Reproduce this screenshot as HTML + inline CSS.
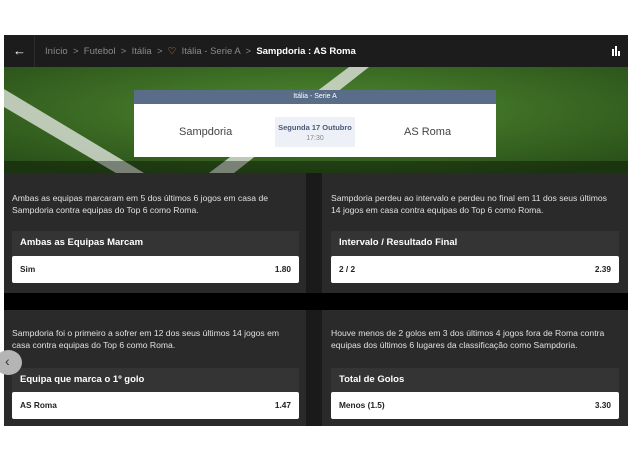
<html><head><style>
body{margin:0;width:633px;height:462px;background:#fff;font-family:"Liberation Sans",sans-serif;position:relative;overflow:hidden}
.a{position:absolute}
.top{left:4px;top:35px;width:624px;height:32px;background:#1c1c1c}
.crumb{left:45px;top:46px;font-size:9.5px;color:#8a8a8a;white-space:nowrap}
.crumb b{color:#fff}
.panel{background:#2a2a2a}
.txt{font-size:8.6px;color:#e0e0e0;line-height:12px;white-space:nowrap}
.hd{background:#343434;color:#fff;font-weight:bold;font-size:9.5px;padding-left:8px;box-sizing:border-box;line-height:24px}
.row{background:#fff;border-radius:2px;font-size:8.3px;font-weight:bold;color:#222;line-height:27px;padding:0 8px;box-sizing:border-box;display:flex;justify-content:space-between}
</style></head><body>
<div class="a top"></div>
<div class="a" style="left:34px;top:35px;width:1px;height:32px;background:#2c2c2c"></div>
<div class="a" style="left:13px;top:43px;color:#fff;font-size:13px">&#8592;</div>
<div class="a crumb">Início &nbsp;&gt;&nbsp; Futebol &nbsp;&gt;&nbsp; Itália &nbsp;&gt;&nbsp; <span style="color:#e59a3c">&#9825;</span>&nbsp; Itália - Serie A &nbsp;&gt;&nbsp; <b>Sampdoria : AS Roma</b></div>
<svg class="a" style="left:612px;top:46px" width="9" height="10"><rect x="0" y="3" width="2" height="7" fill="#fff"/><rect x="3" y="0" width="2" height="10" fill="#fff"/><rect x="6" y="5" width="2" height="5" fill="#fff"/></svg>
<svg class="a" style="left:4px;top:67px" width="624" height="106">
<defs><radialGradient id="g" cx="50%" cy="40%" r="70%"><stop offset="0" stop-color="#4f8a30"/><stop offset="1" stop-color="#2a5019"/></radialGradient></defs>
<rect width="624" height="106" fill="url(#g)"/>
<polygon points="0,22 0,40 112,106 140,106" fill="#dfe3dc" opacity=".8"/>
<polygon points="345,0 365,0 230,106 205,106" fill="#dfe3dc" opacity=".8"/>
<rect y="94" width="624" height="12" fill="#000" opacity=".35"/>
</svg>
<div class="a" style="left:134px;top:90px;width:362px;height:67px;background:#fff"></div>
<div class="a" style="left:134px;top:90px;width:362px;height:14px;background:#5a6d88;color:#fff;font-size:7px;text-align:center;line-height:14px">Itália - Serie A</div>
<div class="a" style="left:275px;top:117px;width:80px;height:30px;background:#edf0f6;text-align:center;font-size:7.5px;color:#4a5a78;font-weight:bold;line-height:11px;padding-top:5px;box-sizing:border-box">Segunda 17 Outubro<br><span style="font-weight:normal;color:#888;font-size:7px">17:30</span></div>
<div class="a" style="left:179px;top:126px;font-size:11px;color:#444">Sampdoria</div>
<div class="a" style="left:404px;top:126px;font-size:11px;color:#444">AS Roma</div>
<div class="a" style="left:4px;top:173px;width:624px;height:253px;background:#1a1a1a"></div>
<div class="a" style="left:4px;top:293px;width:624px;height:17px;background:#000"></div>
<div class="a panel" style="left:4px;top:173px;width:302px;height:120px"></div>
<div class="a panel" style="left:322px;top:173px;width:306px;height:120px"></div>
<div class="a panel" style="left:4px;top:310px;width:302px;height:116px"></div>
<div class="a panel" style="left:322px;top:310px;width:306px;height:116px"></div>
<div class="a txt" style="left:12px;top:192px">Ambas as equipas marcaram em 5 dos últimos 6 jogos em casa de<br>Sampdoria contra equipas do Top 6 como Roma.</div>
<div class="a txt" style="left:331px;top:192px">Sampdoria perdeu ao intervalo e perdeu no final em 11 dos seus últimos<br>14 jogos em casa contra equipas do Top 6 como Roma.</div>
<div class="a hd" style="left:12px;top:231px;width:287px;height:25px">Ambas as Equipas Marcam</div>
<div class="a hd" style="left:331px;top:231px;width:288px;height:25px">Intervalo / Resultado Final</div>
<div class="a row" style="left:12px;top:256px;width:287px;height:27px"><span>Sim</span><span>1.80</span></div>
<div class="a row" style="left:331px;top:256px;width:288px;height:27px"><span>2 / 2</span><span>2.39</span></div>
<div class="a txt" style="left:12px;top:327px">Sampdoria foi o primeiro a sofrer em 12 dos seus últimos 14 jogos em<br>casa contra equipas do Top 6 como Roma.</div>
<div class="a txt" style="left:331px;top:327px">Houve menos de 2 golos em 3 dos últimos 4 jogos fora de Roma contra<br>equipas dos últimos 6 lugares da classificação como Sampdoria.</div>
<div class="a hd" style="left:12px;top:368px;width:287px;height:24px">Equipa que marca o 1º golo</div>
<div class="a hd" style="left:331px;top:368px;width:288px;height:24px">Total de Golos</div>
<div class="a row" style="left:12px;top:392px;width:287px;height:27px"><span>AS Roma</span><span>1.47</span></div>
<div class="a row" style="left:331px;top:392px;width:288px;height:27px"><span>Menos (1.5)</span><span>3.30</span></div>
<div class="a" style="left:-5px;top:350px;width:27px;height:25px;border-radius:50%;background:#b5b5b5"></div>
<div class="a" style="left:5px;top:353px;color:#333;font-size:14px">&lsaquo;</div>
</body></html>
